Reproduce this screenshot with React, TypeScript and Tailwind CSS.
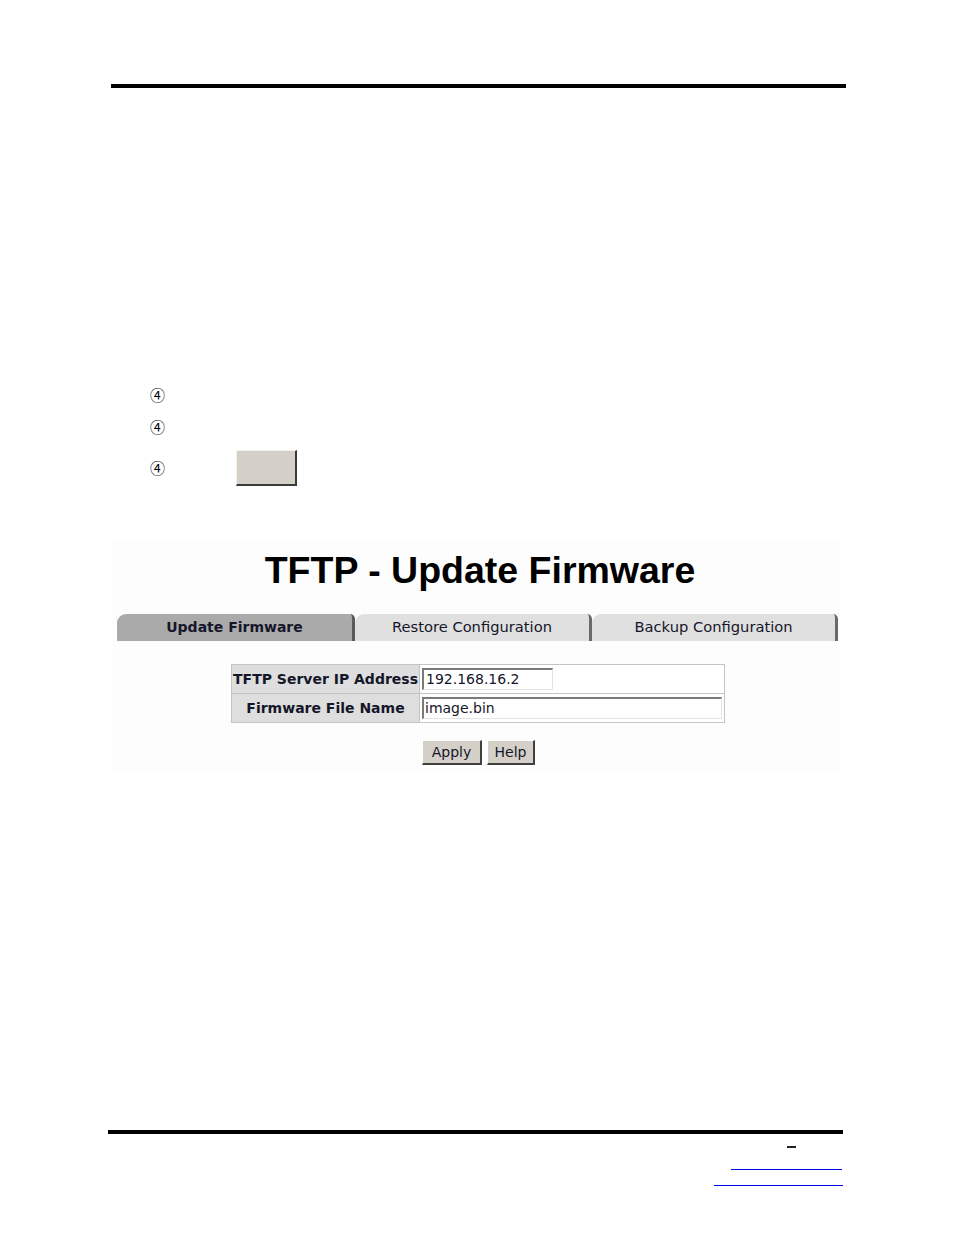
import React from 'react'

const tabs = [
  { label: 'Update Firmware', active: true, width: 'w-[238px]' },
  { label: 'Restore Configuration', active: false, width: 'w-[237px]' },
  { label: 'Backup Configuration', active: false, width: 'w-[246px]' },
]

function Tab({ label, active, width }: { label: string; active: boolean; width: string }) {
  return (
    <div
      className={`${width} h-[27px] flex items-center justify-center rounded-tl-[9px] rounded-tr-[5px] border-r-[3px] ${
        active
          ? 'bg-[#aaaaaa] border-[#5a5a5a] font-bold text-[14px]'
          : 'bg-[#e0e0e0] border-[#6a6a6a] text-[14.7px]'
      } text-[#16162a]`}
    >
      {label}
    </div>
  )
}

function WinButton({ children, className = '' }: { children: React.ReactNode; className?: string }) {
  return (
    <button
      className={`h-[25px] bg-[#d4d0c8] border-t border-l border-white border-r-2 border-b-2 border-r-[#404040] border-b-[#404040] text-[14px] text-[#16162a] leading-none ${className}`}
    >
      {children}
    </button>
  )
}

export default function App() {
  return (
    <div className="w-[954px] h-[1235px] bg-white flex flex-col font-['Liberation_Sans',Arial,sans-serif] text-black">
      {/* header rule */}
      <div className="mt-[84px] ml-[111px] w-[735px] h-[4px] bg-black" />

      {/* steps */}
      <div className="ml-[150px] flex flex-col text-[15px] font-['Noto_Sans_CJK_JP',sans-serif]">
        <div className="mt-[298px] leading-[18px]">④</div>
        <div className="mt-[14px] leading-[18px]">④</div>
        <div className="mt-[14px] flex items-center h-[36px]">
          <span className="leading-[18px]">④</span>
          <div className="ml-[71px] w-[61px] h-[36px] bg-[#d4d0c8] border-t border-l border-[#f4f2ee] border-r-[2px] border-b-[2px] border-r-[#3a3a3a] border-b-[#3a3a3a]" />
        </div>
      </div>

      {/* screenshot */}
      <div className="mt-[54px] ml-[112px] w-[728px] bg-[#fdfdfd] flex flex-col pb-[7px]">
        <h1 className="mt-[6px] text-center text-[37.5px] leading-[48px] font-bold pl-[8px]">
          TFTP - Update Firmware
        </h1>

        <div className="mt-[20px] ml-[5px] flex font-['DejaVu_Sans',Verdana,sans-serif]">
          {tabs.map((t) => (
            <Tab key={t.label} {...t} />
          ))}
        </div>

        <div className="mt-[23px] ml-[119px] w-[494px] border border-[#c4c4c4] font-['DejaVu_Sans',Verdana,sans-serif] text-[14px] text-[#16162a]">
          <div className="flex h-[29px] border-b border-[#c4c4c4]">
            <div className="w-[188px] bg-[#dedede] border-r border-[#c4c4c4] flex items-center justify-center font-bold whitespace-nowrap">
              TFTP Server IP Address
            </div>
            <div className="flex-1 bg-white flex items-center pl-[2px]">
              <div className="w-[131px] h-[22px] border-t-2 border-l-2 border-[#7a7a7a] border-r border-b border-r-[#e4e4e4] border-b-[#e4e4e4] flex items-center pl-[2px]">
                192.168.16.2
              </div>
            </div>
          </div>
          <div className="flex h-[28px]">
            <div className="w-[188px] bg-[#dedede] border-r border-[#c4c4c4] flex items-center justify-center font-bold whitespace-nowrap">
              Firmware File Name
            </div>
            <div className="flex-1 bg-white flex items-center pl-[2px]">
              <div className="w-[300px] h-[22px] border-t-2 border-l-2 border-[#7a7a7a] border-r border-b border-r-[#e4e4e4] border-b-[#e4e4e4] flex items-center pl-[1px]">
                image.bin
              </div>
            </div>
          </div>
        </div>

        <div className="mt-[17px] ml-[310px] flex gap-[5px] font-['DejaVu_Sans',Verdana,sans-serif]">
          <WinButton className="w-[60px]">Apply</WinButton>
          <WinButton className="w-[48px]">Help</WinButton>
        </div>
      </div>

      {/* footer */}
      <div className="mt-[358px] ml-[108px] w-[735px] h-[4px] bg-black" />
      <div className="ml-[787px] mt-[6px] h-[14px] flex items-start">
        <div className="w-[9px] h-[2px] bg-[#222] mt-[6px]" />
      </div>
      <div className="ml-[731px] mt-[15px] w-[111px] h-px bg-[#0000ee]" />
      <div className="ml-[714px] mt-[15px] w-[129px] h-px bg-[#0000ee]" />
    </div>
  )
}
